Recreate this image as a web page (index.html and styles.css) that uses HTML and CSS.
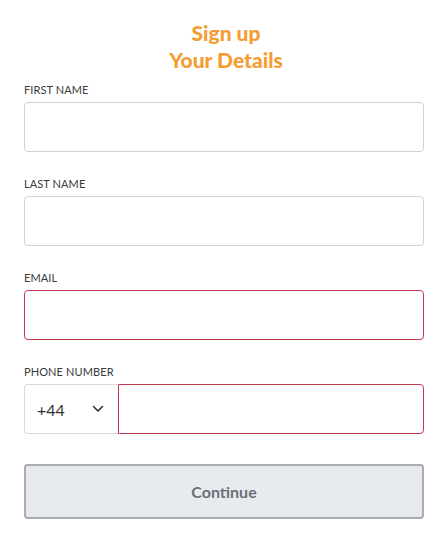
FILE: index.html
```html
<!DOCTYPE html>
<html>
<head>
<meta charset="utf-8">
<link rel="stylesheet" href="styles.css">
</head>
<body>
<div class="page">
  <h1 class="title">Sign up<br>Your Details</h1>
  <form class="form">
    <div class="field">
      <label class="label">FIRST NAME</label>
      <div class="input"></div>
    </div>
    <div class="field">
      <label class="label">LAST NAME</label>
      <div class="input"></div>
    </div>
    <div class="field">
      <label class="label">EMAIL</label>
      <div class="input error"></div>
    </div>
    <div class="field">
      <label class="label">PHONE NUMBER</label>
      <div class="phone">
        <div class="code"><span>+44</span>
          <svg class="chev" width="12" height="8" viewBox="0 0 12 8"><path d="M1.5 1.5 L6 6 L10.5 1.5" fill="none" stroke="#333" stroke-width="1.6" stroke-linecap="round" stroke-linejoin="round"/></svg>
        </div>
        <div class="input phone-input error"></div>
      </div>
    </div>
    <div class="button">Continue</div>
  </form>
</div>
</body>
</html>
```
FILE: styles.css
```css
html, body { margin: 0; padding: 0; background: #fff; }
body { font-family: Lato, "Noto Sans", sans-serif; }
.page { padding: 19px 20px 0 24px; }
.title {
  margin: 0;
  text-align: center;
  color: #f59d32;
  font-size: 21px;
  font-weight: 900;
  line-height: 27px;
  padding-left: 4px;
}
.form { display: flex; flex-direction: column; margin-top: 10px; }
.field { display: flex; flex-direction: column; margin-bottom: 25px; }
.label { font-size: 11px; color: #3a3a3a; letter-spacing: 0.1px; line-height: 14px; margin-bottom: 5px; }
.input { height: 48px; border: 1px solid #d2d2d2; border-radius: 4px; background: #fff; }
.input.error { border-color: #c23a52; }
.phone { display: flex; }
.code {
  width: 93px; height: 48px; box-sizing: content-box;
  border: 1px solid #d9d9d9; border-right: none; border-radius: 4px 0 0 4px;
  display: flex; align-items: center; justify-content: space-between;
  font-size: 16px; color: #333;
}
.code span { margin-left: 12px; }
.chev { margin-right: 14px; }
.phone-input { flex: 1; border-radius: 0 4px 4px 0; }
.button {
  margin-top: 5px;
  height: 51px; border: 2px solid #a8adb3; border-radius: 4px;
  background: #e8ebee; color: #6b7078;
  display: flex; align-items: center; justify-content: center;
  font-size: 16px; font-weight: 700;
}
```
